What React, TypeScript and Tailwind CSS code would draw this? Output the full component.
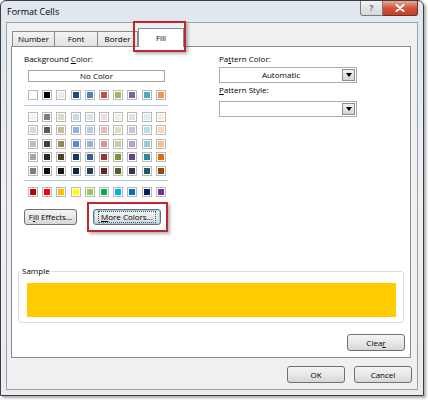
import React from "react";

const themeRow = ["#FFFFFF", "#000000", "#EEECE1", "#1F497D", "#4F81BD", "#C0504D", "#9BBB59", "#8064A2", "#4BACC6", "#F79646"];

const tintRows = [
  ["#F2F2F2", "#7F7F7F", "#DDD9C3", "#C6D9F0", "#DBE5F1", "#F2DCDB", "#EBF1DD", "#E5E0EC", "#DBEEF3", "#FDEADA"],
  ["#D8D8D8", "#595959", "#C4BD97", "#8DB3E2", "#B8CCE4", "#E5B9B7", "#D7E3BC", "#CCC1D9", "#B7DDE8", "#FBD5B5"],
  ["#BFBFBF", "#3F3F3F", "#938953", "#548DD4", "#95B3D7", "#D99694", "#C3D69B", "#B2A2C7", "#92CDDC", "#FAC08F"],
  ["#A5A5A5", "#262626", "#494429", "#17365D", "#366092", "#953734", "#76923C", "#5F497A", "#31859B", "#E36C09"],
  ["#7F7F7F", "#0C0C0C", "#1D1B10", "#0F243E", "#244061", "#632423", "#4F6128", "#3F3151", "#205867", "#974806"],
];

const standardRow = ["#C00000", "#FF0000", "#FFC000", "#FFFF00", "#92D050", "#00B050", "#00B0F0", "#0070C0", "#002060", "#7030A0"];

const Swatch: React.FC<{ color: string }> = ({ color }) => (
  <div className="w-[10px] h-[10px] border border-[#b9b9b9] p-px bg-white">
    <div className="w-full h-full" style={{ backgroundColor: color }} />
  </div>
);

const SwatchRow: React.FC<{ colors: string[] }> = ({ colors }) => (
  <div className="flex gap-x-[4.2px]">
    {colors.map((c, i) => (
      <Swatch key={i} color={c} />
    ))}
  </div>
);

const WinButton: React.FC<{ className?: string; children: React.ReactNode }> = ({ className = "", children }) => (
  <div
    className={`flex items-center justify-center rounded-[3px] border border-[#707070] bg-linear-to-b from-[#f4f4f4] via-[#e8e8e8] to-[#d6d6d6] text-[8px] text-black ${className}`}
  >
    {children}
  </div>
);

const Dropdown: React.FC<{ value?: string }> = ({ value }) => (
  <div className="flex h-[16px] w-[138px] items-center border border-[#abadb3] bg-white">
    <div className="flex-1 text-center text-[8px] text-black">{value}</div>
    <div className="mr-px flex h-[12px] w-[13px] items-center justify-center border border-[#8c8c8c] bg-linear-to-b from-[#f2f2f2] to-[#d4d4d4]">
      <svg width="6" height="4" viewBox="0 0 6 4">
        <path d="M0 0h6L3 4z" fill="#000" />
      </svg>
    </div>
  </div>
);

const Tab: React.FC<{ label: string; selected?: boolean; width: number }> = ({ label, selected, width }) => (
  <div
    className={
      selected
        ? "relative z-10 -mb-px flex h-[19px] items-center justify-center border border-b-0 border-[#898c95] bg-white text-[8px] text-black"
        : "flex h-[15px] items-center justify-center border border-l-0 border-b-0 border-[#898c95] bg-linear-to-b from-[#f3f3f3] to-[#e3e3e3] text-[8px] text-black first:border-l"
    }
    style={{ width }}
  >
    {label}
  </div>
);

export default function App() {
  return (
    <div className="h-[400px] w-[428px] bg-white" style={{ fontFamily: '"Open Sans", "Noto Sans", sans-serif' }}>
      <div className="h-[396px] w-[424px] rounded-t-[6px] border border-[#3e3e3e] bg-linear-to-b from-[#dfe6ee] via-[#eef1f4] to-[#e9ecef] px-[5px] shadow-[2px_2px_3px_rgba(0,0,0,0.35)]">
        {/* title bar */}
        <div className="flex h-[21px] items-start justify-between">
          <div className="pl-[1px] pt-[5px] text-[9px] leading-[12px] text-black">Format Cells</div>
          <div className="flex">
            <div className="flex h-[15px] w-[23px] items-center justify-center rounded-bl-[3px] border border-t-0 border-[#7c7c7c] bg-linear-to-b from-[#f1f3f5] to-[#d4d8dc] text-[8px] font-bold text-[#6c6c6c]">
              ?
            </div>
            <div className="flex h-[15px] w-[35px] items-center justify-center rounded-br-[3px] border border-l-0 border-t-0 border-[#7a2a1e] bg-linear-to-b from-[#e9a999] via-[#d0533c] to-[#c0412a]">
              <svg width="10" height="8" viewBox="0 0 10 8">
                <path d="M1.5 1l7 6M8.5 1l-7 6" stroke="#fff" strokeWidth="2" strokeLinecap="round" />
              </svg>
            </div>
          </div>
        </div>

        {/* client area */}
        <div className="h-[368px] border border-[#9aa3ad] bg-[#f0f0f0] px-[4px] pt-[5px]">
          {/* tabs */}
          <div className="flex h-[18px] items-end pl-px">
            <Tab label="Number" width={43} />
            <Tab label="Font" width={43} />
            <Tab label="Border" width={40} />
            <div className="relative">
              <Tab label="Fill" selected width={46} />
              <div className="absolute -left-[5px] -top-[7px] h-[31px] w-[53px] border-2 border-[#c0272d] shadow-[2px_2px_3px_rgba(0,0,0,0.3)]" />
            </div>
          </div>

          {/* panel */}
          <div className="h-[312px] w-[400px] border border-[#898c95] bg-white text-black">
            <div className="flex h-[179px]">
              {/* left column */}
              <div className="w-[157px] pl-[12px] pt-[6px]">
                <div className="text-[8px] leading-[12px]">
                  Background <span className="underline">C</span>olor:
                </div>
                <div className="ml-[4px] mt-[5px] flex h-[12px] w-[137px] items-center justify-center border border-[#a5a5a5] text-[8px]">
                  No Color
                </div>
                <div className="ml-[4px] mt-[8px]">
                  <SwatchRow colors={themeRow} />
                </div>
                <div className="mt-[5px] h-px w-[144px] bg-[#a9c8ec]" />
                <div className="ml-[4px] mt-[6px] flex flex-col gap-y-[3.4px]">
                  {tintRows.map((row, i) => (
                    <SwatchRow key={i} colors={row} />
                  ))}
                </div>
                <div className="mt-[4px] h-px w-[144px] bg-[#a9c8ec]" />
                <div className="ml-[4px] mt-[6px]">
                  <SwatchRow colors={standardRow} />
                </div>
                <div className="mt-[12px] flex items-center gap-[16px]">
                  <WinButton className="h-[16px] w-[53px]">
                    F<span className="underline">i</span>ll Effects...
                  </WinButton>
                  <div className="relative">
                    <WinButton className="h-[16px] w-[68px] border-[#3c7fb1] shadow-[inset_0_0_0_1px_#8fd0f3]">
                      <span className="border border-dotted border-[#555] px-[2px] leading-[10px]">
                        <span className="underline">M</span>ore Colors...
                      </span>
                    </WinButton>
                    <div className="absolute -left-[6px] -top-[7px] h-[30px] w-[81px] border-2 border-[#c0272d] shadow-[2px_2px_3px_rgba(0,0,0,0.3)]" />
                  </div>
                </div>
              </div>

              {/* right column */}
              <div className="pl-[50px] pt-[6px]">
                <div className="text-[8px] leading-[12px]">
                  Pa<span className="underline">t</span>tern Color:
                </div>
                <div className="mt-[2px]">
                  <Dropdown value="Automatic" />
                </div>
                <div className="mt-[1px] text-[8px] leading-[12px]">
                  <span className="underline">P</span>attern Style:
                </div>
                <div className="mt-[5px]">
                  <Dropdown />
                </div>
              </div>
            </div>

            {/* sample */}
            <div className="relative mx-[6px] mt-[45px] h-[52px] rounded-[3px] border border-[#d5dfe5] pl-[8px] pr-[7px] pt-[11px]">
              <div className="absolute -top-[7px] left-[2px] bg-white px-px text-[8px] leading-[12px]">Sample</div>
              <div className="h-[34px] bg-[#FFCC00]" />
            </div>

            <div className="mt-[11px] flex justify-end pr-[5px]">
              <WinButton className="h-[17px] w-[58px]">
                Clea<span className="underline">r</span>
              </WinButton>
            </div>
          </div>

          {/* dialog buttons */}
          <div className="mt-[8px] flex justify-end gap-[9px] pr-[1px]">
            <WinButton className="h-[17px] w-[58px]">OK</WinButton>
            <WinButton className="h-[17px] w-[58px]">Cancel</WinButton>
          </div>
        </div>
      </div>
    </div>
  );
}
